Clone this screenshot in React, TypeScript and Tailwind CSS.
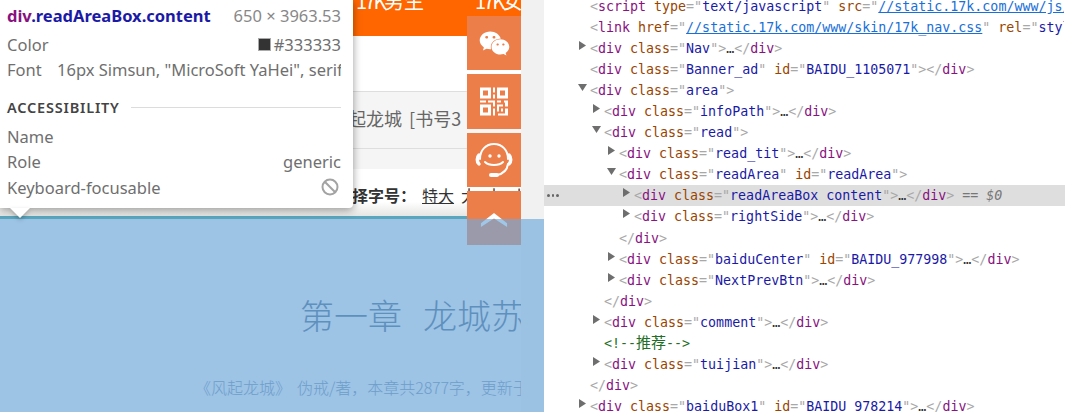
import React from "react";
import { FaWeixin } from "react-icons/fa";

const Tag = ({ children }: { children: React.ReactNode }) => <span className="text-[#881280]">{children}</span>;
const Br = ({ children }: { children: React.ReactNode }) => <span className="text-[#a8a8a8]">{children}</span>;
const An = ({ children }: { children: React.ReactNode }) => <span className="text-[#994500]">{children}</span>;
const Av = ({ children }: { children: React.ReactNode }) => <span className="text-[#1a1aa6]">{children}</span>;

type Attr = [string, string, boolean?];

function Open({ name, attrs, tail }: { name: string; attrs: Attr[]; tail?: React.ReactNode }) {
  return (
    <>
      <Br>&lt;</Br>
      <Tag>{name}</Tag>
      {attrs.map(([k, v, link]) => (
        <span key={k}>
          {" "}
          <An>{k}</An>
          <Br>="</Br>
          {link ? <span className="text-[#1a6fd8] underline">{v}</span> : <Av>{v}</Av>}
          <Br>"</Br>
        </span>
      ))}
      <Br>&gt;</Br>
      {tail}
    </>
  );
}

const Close = () => (
  <>
    <Br>&lt;/</Br>
    <Tag>div</Tag>
    <Br>&gt;</Br>
  </>
);
const Fold = () => (
  <>
    <span className="text-[#333]">…</span>
    <Close />
  </>
);

function Row({
  level,
  arrow,
  selected,
  clip,
  children,
}: {
  level: 0 | 1 | 2 | 3;
  arrow?: "r" | "d";
  selected?: boolean;
  clip?: boolean;
  children: React.ReactNode;
}) {
  const pad = ["pl-[46px]", "pl-[60px]", "pl-[75px]", "pl-[90px]"][level];
  return (
    <div
      className={`relative h-[21.05px] leading-[21px] whitespace-pre ${pad} ${selected ? "bg-[#dedede]" : ""} ${
        clip ? "w-[520px] overflow-hidden" : ""
      }`}
    >
      {selected && (
        <span className="absolute left-[3px] top-[9px] flex gap-[2px]">
          <i className="w-[2.5px] h-[2.5px] rounded-full bg-[#666]" />
          <i className="w-[2.5px] h-[2.5px] rounded-full bg-[#666]" />
          <i className="w-[2.5px] h-[2.5px] rounded-full bg-[#666]" />
        </span>
      )}
      <span className="relative">
        {arrow === "r" && (
          <svg className="absolute left-[-11px] top-[0px]" width="7" height="9" viewBox="0 0 7 9">
            <path d="M0 0L7 4.5L0 9Z" fill="#6e6e6e" />
          </svg>
        )}
        {arrow === "d" && (
          <svg className="absolute left-[-12px] top-[1px]" width="9" height="7" viewBox="0 0 9 7">
            <path d="M0 0H9L4.5 7Z" fill="#6e6e6e" />
          </svg>
        )}
        {children}
      </span>
    </div>
  );
}

function Devtools() {
  return (
    <div className="flex-1 h-full overflow-hidden bg-white font-['DejaVu_Sans_Mono','Noto_Sans_CJK_SC',monospace] text-[13.3px]">
      <div className="-mt-[4px]">
        <Row level={0} clip>
          <Open name="script" attrs={[["type", "text/javascript"], ["src", "//static.17k.com/www/js/", true]]} />
        </Row>
        <Row level={0} clip>
          <Open name="link" attrs={[["href", "//static.17k.com/www/skin/17k_nav.css", true], ["rel", "stylesheet"]]} />
        </Row>
        <Row level={0} arrow="r"><Open name="div" attrs={[["class", "Nav"]]} /><Fold /></Row>
        <Row level={0}><Open name="div" attrs={[["class", "Banner_ad"], ["id", "BAIDU_1105071"]]} /><Close /></Row>
        <Row level={0} arrow="d"><Open name="div" attrs={[["class", "area"]]} /></Row>
        <Row level={1} arrow="r"><Open name="div" attrs={[["class", "infoPath"]]} /><Fold /></Row>
        <Row level={1} arrow="d"><Open name="div" attrs={[["class", "read"]]} /></Row>
        <Row level={2} arrow="r"><Open name="div" attrs={[["class", "read_tit"]]} /><Fold /></Row>
        <Row level={2} arrow="d"><Open name="div" attrs={[["class", "readArea"], ["id", "readArea"]]} /></Row>
        <Row level={3} arrow="r" selected>
          <Open name="div" attrs={[["class", "readAreaBox content"]]} />
          <Fold />
          <span className="text-[#777]"> == <i>$0</i></span>
        </Row>
        <Row level={3} arrow="r"><Open name="div" attrs={[["class", "rightSide"]]} /><Fold /></Row>
        <Row level={2}><Close /></Row>
        <Row level={2} arrow="r"><Open name="div" attrs={[["class", "baiduCenter"], ["id", "BAIDU_977998"]]} /><Fold /></Row>
        <Row level={2} arrow="r"><Open name="div" attrs={[["class", "NextPrevBtn"]]} /><Fold /></Row>
        <Row level={1}><Close /></Row>
        <Row level={1} arrow="r"><Open name="div" attrs={[["class", "comment"]]} /><Fold /></Row>
        <Row level={1}><span className="text-[#236e25]">&lt;!--<span className="text-[15px]">推荐</span>--&gt;</span></Row>
        <Row level={1} arrow="r"><Open name="div" attrs={[["class", "tuijian"]]} /><Fold /></Row>
        <Row level={0}><Close /></Row>
        <Row level={0} arrow="r"><Open name="div" attrs={[["class", "baiduBox1"], ["id", "BAIDU_978214"]]} /><Fold /></Row>
      </div>
    </div>
  );
}

function Tooltip() {
  return (
    <div className="absolute left-0 top-0 z-30 w-[353px] h-[208px] bg-white rounded-br-[4px] shadow-[0_2px_8px_rgba(0,0,0,0.4)] pl-[7px] pr-[12px] text-[#6f6f6f] text-[16.5px] leading-[25px] font-['Noto_Sans',sans-serif]">
      <div className="flex justify-between items-center h-[30px]">
        <span className="font-bold">
          <span className="text-[#881280]">div</span>
          <span className="text-[#1a1aa6]">.readAreaBox.content</span>
        </span>
        <span className="text-[#888]">650 × 3963.53</span>
      </div>
      <div className="flex justify-between items-center h-[25px] mt-[2px]">
        <span>Color</span>
        <span className="flex items-center gap-[3px]">
          <i className="w-[13px] h-[13px] bg-[#333] border border-[#aaa]" />#333333
        </span>
      </div>
      <div className="flex justify-between items-center h-[25px] whitespace-nowrap overflow-hidden">
        <span>Font</span>
        <span className="overflow-hidden w-[284px] text-left">16px Simsun, "MicroSoft YaHei", serif</span>
      </div>
      <div className="flex items-center gap-[11px] h-[20px] mt-[15px] text-[14.5px] font-semibold tracking-[0.8px] text-[#444]">
        ACCESSIBILITY
        <i className="flex-1 h-px bg-[#dcdcdc]" />
      </div>
      <div className="flex h-[25px] mt-[7px]">Name</div>
      <div className="flex justify-between h-[25px]"><span>Role</span><span>generic</span></div>
      <div className="flex justify-between items-center h-[26px]">
        <span>Keyboard-focusable</span>
        <svg className="mr-[2px]" width="18" height="18" viewBox="0 0 18 18" fill="none" stroke="#a3a3a3" strokeWidth="2">
          <circle cx="9" cy="9" r="7.5" />
          <path d="M3.8 3.8L14.2 14.2" />
        </svg>
      </div>
      <div className="absolute left-[10px] top-[208px] w-0 h-0 border-l-[10px] border-r-[10px] border-t-[10px] border-l-transparent border-r-transparent border-t-white drop-shadow-[0_2px_2px_rgba(0,0,0,0.25)]" />
    </div>
  );
}

function SideButtons() {
  const cls = "w-[54px] h-[54px] bg-[#ec7e4a] flex items-center justify-center text-white";
  return (
    <div className="absolute left-[467px] top-[16px] z-10 flex flex-col gap-[4px]">
      <div className={`${cls} bg-[#e97f4c]`}><FaWeixin size={31} /></div>
      <div className={`${cls} h-[55px]`}>
        <svg width="28" height="29" viewBox="0 0 28 28" fill="white">
          <path fillRule="evenodd" d="M0 0H11V11H0ZM3 3V8H8V3Z" />
          <path fillRule="evenodd" d="M17 0H28V11H17ZM20 3V8H25V3Z" />
          <path fillRule="evenodd" d="M0 17H11V28H0ZM3 20V25H8V20Z" />
          <path d="M13 0H15V5H13ZM13 7H15V11H13ZM0 13H6V15H0ZM8 13H15V15H8ZM13 15H15V19H13ZM17 13H21V15H17ZM24 13H28V19H25V15H24ZM17 17H23V19H17ZM17 19H19V24H17ZM13 21H15V28H13ZM21 21H23V24H21ZM25 21H28V28H18V26H25Z" />
        </svg>
      </div>
      <div className={cls}>
        <svg width="38" height="36" viewBox="0 0 38 36" fill="none" stroke="white" strokeWidth="2" strokeLinecap="round">
          <path d="M5 17C5 8 11 2 19 2S33 8 33 17" />
          <path d="M4 13C2 15 1.5 20 4 22" strokeWidth="3.5" />
          <path d="M34 13C36 15 36.5 20 34 22" strokeWidth="3.5" />
          <path d="M33 22C32 29 27 32 22 33" />
          <path d="M16 33H22" strokeWidth="4" />
          <path d="M10 20C14 24 24 24 28 20" />
          <circle cx="15" cy="14" r="1.7" fill="white" stroke="none" />
          <circle cx="24" cy="14" r="1.7" fill="white" stroke="none" />
        </svg>
      </div>
      <div className={`${cls} items-start pt-[22px]`}>
        <svg width="28" height="14" viewBox="0 0 28 15" fill="white"><path d="M14 0L28 11V15L14 6L0 15V11Z" /></svg>
      </div>
    </div>
  );
}

function PageContent() {
  return (
    <div className="w-[521px] h-full overflow-hidden bg-white font-['Noto_Sans_CJK_SC',sans-serif]">
      <div className="h-[36px] bg-[#ff6600] overflow-hidden text-white text-[20px] leading-[20px] pl-[356px] whitespace-nowrap">
        <div className="flex gap-[51px] -mt-[9px]">
          <span><span className="tracking-[-2.4px]">17K</span>男生</span>
          <span><span className="tracking-[-2.4px]">17K</span>女生</span>
        </div>
      </div>
      <div className="h-[55px] bg-white" />
      <div className="h-[58px] bg-[#f5f5f5] border-t border-b border-[#dedede] pl-[330px] text-[#666] text-[18px] leading-[53px] whitespace-nowrap">
        风起龙城 <span className="ml-[3px]">[书号3</span>
      </div>
      <div className="h-[20px] bg-[#f5f5f5]" />
      <div className="h-[47px] bg-gradient-to-b from-white from-70% to-[#e6e6e4] pl-[352px] text-[#333] text-[16px] leading-[52px] whitespace-nowrap">
        <span className="font-semibold">择字号：</span>
        <span className="ml-[6px] underline">特大</span>
        <span className="ml-[7px]">大</span>
        <span className="ml-[9px]">中</span>
        <span className="ml-[9px]">小</span>
      </div>
      <div className="h-[3px] bg-[#5aa6bd]" />
      <div className="relative h-[193px] bg-[#f5f5f5] whitespace-nowrap">
        <div className="absolute left-[300px] top-[76px] text-[34px] leading-[40px] text-[#3f6283] font-light">
          第一章<span className="ml-[21px]">龙城苏</span>
        </div>
        <div className="absolute left-[195px] top-[158px] text-[16px] leading-[20px] text-[#6c89a8] font-light">
          《风起龙城》<span className="ml-[6px]">伪戒/著，本章共<span className="tracking-[-0.2px]">2877</span>字，更新于</span>
        </div>
      </div>
    </div>
  );
}

export default function App() {
  return (
    <div className="flex w-[1065px] h-[412px] overflow-hidden bg-white">
      <div className="relative w-[544px] h-full shrink-0 flex bg-[#f1f1f1]">
        <PageContent />
        <SideButtons />
        <div className="absolute left-0 right-0 top-[219px] bottom-0 z-20 bg-[rgba(111,168,220,0.66)]" />
        <Tooltip />
      </div>
      <Devtools />
    </div>
  );
}
